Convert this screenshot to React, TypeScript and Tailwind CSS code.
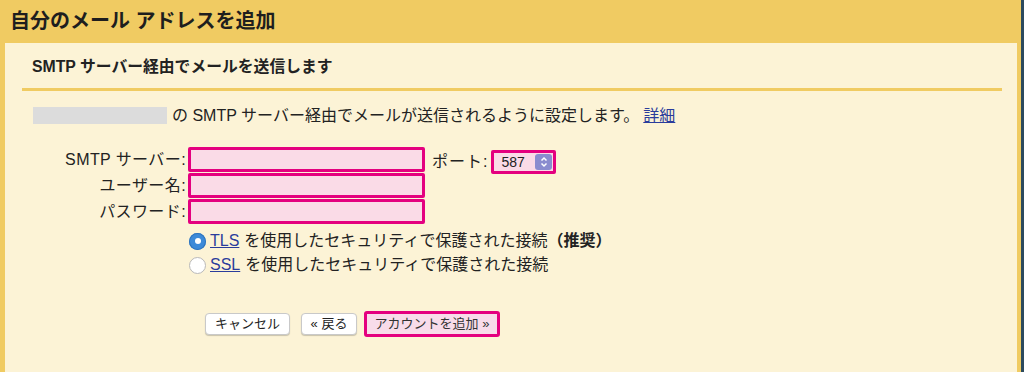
import { useState } from "react";

const PINK = "border-[3px] border-[#e4007f]";

function Field({ label }: { label: string }) {
  return (
    <div className="flex items-center">
      <label className="w-[183px] pr-[2px] text-right text-[16px] leading-none tracking-[0.4px] text-[#222]">{label}</label>
      <input className={`h-[25px] w-[237px] ${PINK} rounded-[2px] bg-[#fadbe7] outline-none`} />
    </div>
  );
}

function Radio({ checked, onClick }: { checked: boolean; onClick: () => void }) {
  return (
    <button
      onClick={onClick}
      className={
        checked
          ? "flex h-[17px] w-[17px] items-center justify-center rounded-full bg-[#3d8ad8] shadow-[inset_0_0_0_1px_#2f74bd]"
          : "h-[17px] w-[17px] rounded-full border border-[#b9b9b9] bg-white"
      }
    >
      {checked && <span className="h-[6px] w-[6px] rounded-full bg-white" />}
    </button>
  );
}

export default function App() {
  const [secure, setSecure] = useState<"tls" | "ssl">("tls");

  return (
    <div className="flex h-[372px] w-[1024px] overflow-hidden bg-[#f0cb62] font-['Liberation_Sans','Noto_Sans_CJK_JP',sans-serif] text-[#222]">
      <div className="flex flex-1 flex-col pl-[5px] pr-[4px]">
        <div className="h-[43px] pl-[5px] text-[20px] font-bold leading-[43px] text-[#1e1e1e]">
          自分のメール アドレスを追加
        </div>

        <div className="flex-1 bg-[#fcf3d6]">
          <div className="pl-[27px] pt-[14px] text-[15.8px] font-bold leading-[20px]">
            SMTP サーバー経由でメールを送信します
          </div>
          <div className="ml-[17px] mr-[15px] mt-[11px] h-[3px] bg-[#f0cb62]" />

          <div className="ml-[28px] mt-[16px] flex h-[17px] items-center text-[16px]">
            <span className="h-[17px] w-[134px] bg-[#dcdcdc]" />
            <span className="ml-[5px]">の SMTP サーバー経由でメールが送信されるように設定します。</span>
            <a href="#" className="ml-[4px] text-[#2a3c9c] underline">
              詳細
            </a>
          </div>

          <div className="mt-[23px] flex">
            <div className="flex flex-col gap-[1px]">
              <Field label="SMTP サーバー:" />
              <Field label="ユーザー名:" />
              <Field label="パスワード:" />
            </div>
            <div className="ml-[7px] mt-[3px] flex h-[24px] items-center">
              <span className="text-[16px] tracking-[1px]">ポート:</span>
              <div className={`ml-[3px] flex h-[24px] w-[65px] items-center justify-between ${PINK} rounded-[2px] bg-[#fadbe7] pl-[7px] pr-[1px]`}>
                <span className="text-[14px]">587</span>
                <span className="flex h-[16px] w-[17px] items-center justify-center rounded-[3px] bg-[#8a8ccf]">
                  <svg width="8" height="12" viewBox="0 0 8 12" fill="none" stroke="white" strokeWidth="1.5">
                    <path d="M1.5 4.5 L4 2 L6.5 4.5" />
                    <path d="M1.5 7.5 L4 10 L6.5 7.5" />
                  </svg>
                </span>
              </div>
            </div>
          </div>

          <div className="ml-[184px] mt-[7px] flex flex-col gap-[4px] text-[16px]">
            <div className="flex h-[20px] items-center">
              <Radio checked={secure === "tls"} onClick={() => setSecure("tls")} />
              <a href="#" className="ml-[4px] text-[#2a3c9c] underline">TLS</a>
              <span className="ml-[5px]">を使用したセキュリティで保護された接続</span>
              <span className="font-bold">（推奨）</span>
            </div>
            <div className="flex h-[20px] items-center">
              <Radio checked={secure === "ssl"} onClick={() => setSecure("ssl")} />
              <a href="#" className="ml-[4px] text-[#2a3c9c] underline">SSL</a>
              <span className="ml-[5px]">を使用したセキュリティで保護された接続</span>
            </div>
          </div>

          <div className="ml-[200px] mt-[36px] flex items-center text-[13px]">
            <button className="h-[22px] w-[85px] rounded-[4px] border border-[#c9c9c9] bg-white shadow-[0_1px_1px_rgba(0,0,0,0.2)]">
              キャンセル
            </button>
            <button className="ml-[11px] h-[22px] w-[56px] rounded-[4px] border border-[#c9c9c9] bg-white shadow-[0_1px_1px_rgba(0,0,0,0.2)]">
              « 戻る
            </button>
            <button className={`ml-[7px] h-[26px] w-[136px] rounded-[3px] ${PINK} bg-[#f8dcea] text-[#333]`}>
              アカウントを追加 »
            </button>
          </div>
        </div>
      </div>
      <div className="w-[3px] bg-[#2c4a5e]" />
    </div>
  );
}
